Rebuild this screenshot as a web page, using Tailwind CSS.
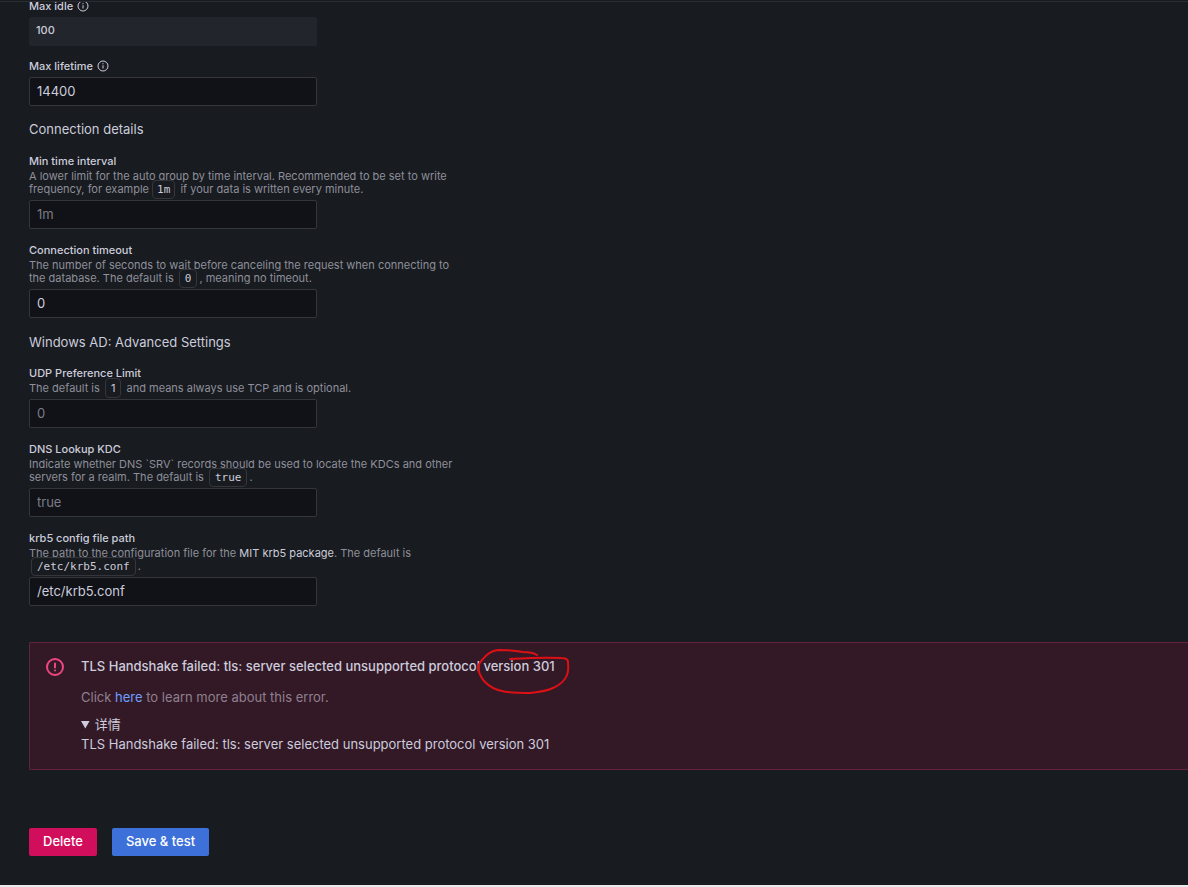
<!DOCTYPE html>
<html lang="en">
<head>
    <meta charset="utf-8">
    <title>Data source settings</title>
    <script src="https://cdn.jsdelivr.net/npm/@tailwindcss/browser@4"></script>
</head>
<body class="bg-[#181b1f] font-['Inter','Noto_Sans_CJK_SC',sans-serif] text-[13px] text-[#ccccdc]">
    <div class="flex flex-col min-h-screen overflow-hidden">
        <header class="h-[2px] border-b border-[#2a2d33]"></header>

        <main class="grow overflow-hidden pl-[29px]">
            <form id="settingsForm">
                <div class="-mt-[3px]">
                    <div class="flex items-center gap-1 mb-1">
                        <label for="maxIdle" class="text-[11px] leading-[14px] font-medium">Max idle</label>
                        <svg class="size-3" viewBox="0 0 12 12" fill="none" stroke="currentColor"><circle cx="6" cy="6" r="5"/><path d="M6 5.3v3.2M6 3.2v1.1"/></svg>
                    </div>
                    <input id="maxIdle" type="text" value="100" disabled class="block w-72 h-[29px] px-[7px] pb-[3px] bg-[#22252b] text-[11px] font-medium rounded-xs">
                </div>

                <div class="mt-[13px]">
                    <div class="flex items-center gap-1 mb-1">
                        <label for="maxLifetime" class="text-[11px] leading-[14px] font-medium">Max lifetime</label>
                        <svg class="size-3" viewBox="0 0 12 12" fill="none" stroke="currentColor"><circle cx="6" cy="6" r="5"/><path d="M6 5.3v3.2M6 3.2v1.1"/></svg>
                    </div>
                    <input id="maxLifetime" type="text" value="14400" class="block w-72 h-[29px] px-[7px] pb-[2px] bg-[#111217] border border-[#34363c] rounded-xs">
                </div>

                <h6 class="mt-[13px] leading-5">Connection details</h6>

                <div class="mt-[14px]">
                    <label for="minInterval" class="block mb-px text-[11px] leading-4 font-medium">Min time interval</label>
                    <p class="w-[432px] mb-1 text-[11px] leading-[13px] text-[#8e8f9b]">A lower limit for the auto group by time interval. Recommended to be set to write frequency, for example <code class="mr-[2px] px-1 py-[2px] font-['DejaVu_Sans_Mono',monospace] text-[#ccccdc] bg-[#181b1f] border border-[#34363c] rounded-sm">1m</code> if your data is written every minute.</p>
                    <input id="minInterval" type="text" placeholder="1m" class="block w-72 h-[29px] px-[7px] pb-[2px] bg-[#111217] border border-[#34363c] rounded-xs placeholder:text-[#7b7c87]">
                </div>

                <div class="mt-[13px]">
                    <label for="timeout" class="block mb-px text-[11px] leading-4 font-medium">Connection timeout</label>
                    <p class="w-[432px] mb-1 text-[11px] leading-[13px] text-[#8e8f9b]">The number of seconds to wait before canceling the request when connecting to the database. The default is <code class="mx-[2px] px-[5px] py-[2px] font-['DejaVu_Sans_Mono',monospace] text-[#ccccdc] bg-[#181b1f] border border-[#34363c] rounded-sm">0</code>, meaning no timeout.</p>
                    <input id="timeout" type="text" value="0" class="block w-72 h-[29px] px-[7px] pb-[2px] bg-[#111217] border border-[#34363c] rounded-xs">
                </div>

                <h6 class="mt-[14px] leading-5">Windows AD: Advanced Settings</h6>

                <div class="mt-[13px]">
                    <label for="udpLimit" class="block mb-px text-[11px] leading-4 font-medium">UDP Preference Limit</label>
                    <p class="w-[432px] mb-1 text-[11px] leading-[13px] text-[#8e8f9b]">The default is <code class="mx-[2px] px-[5px] py-[2px] font-['Inter',sans-serif] text-[#ccccdc] bg-[#181b1f] border border-[#34363c] rounded-sm">1</code> and means always use TCP and is optional.</p>
                    <input id="udpLimit" type="text" placeholder="0" class="block w-72 h-[29px] px-[7px] pb-[2px] bg-[#111217] border border-[#34363c] rounded-xs placeholder:text-[#7b7c87]">
                </div>

                <div class="mt-[13px]">
                    <label for="dnsLookup" class="block mb-px text-[11px] leading-4 font-medium">DNS Lookup KDC</label>
                    <p class="w-[432px] mb-1 text-[11px] leading-[13px] text-[#8e8f9b]">Indicate whether DNS `SRV` records should be used to locate the KDCs and other servers for a realm. The default is <code class="mx-[2px] px-[5px] py-[2px] font-['DejaVu_Sans_Mono',monospace] text-[#ccccdc] bg-[#181b1f] border border-[#34363c] rounded-sm">true</code>.</p>
                    <input id="dnsLookup" type="text" placeholder="true" class="block w-72 h-[29px] px-[7px] pb-[2px] bg-[#111217] border border-[#34363c] rounded-xs placeholder:text-[#7b7c87]">
                </div>

                <div class="mt-[13px]">
                    <label for="krb5Path" class="block mb-px text-[11px] leading-4 font-medium">krb5 config file path</label>
                    <p class="w-[432px] mb-1 text-[11px] leading-[13px] text-[#8e8f9b]">The path to the configuration file for the <a href="#" class="text-[#ccccdc]">MIT krb5 package</a>. The default is <code class="mx-[2px] px-[5px] py-[2px] font-['DejaVu_Sans_Mono',monospace] text-[#ccccdc] bg-[#181b1f] border border-[#34363c] rounded-sm">/etc/krb5.conf</code>.</p>
                    <input id="krb5Path" type="text" value="/etc/krb5.conf" class="block w-72 h-[29px] px-[7px] pb-[2px] bg-[#111217] border border-[#34363c] rounded-xs">
                </div>

                <div role="alert" class="flex gap-4 mt-9 pl-[15px] pt-[13px] pb-[15px] bg-[#331926] border border-r-0 border-[#64223f] rounded-l-xs">
                    <svg class="shrink-0 size-5 mt-px text-[#f0467f]" viewBox="0 0 20 20" fill="none" stroke="currentColor" stroke-width="2" stroke-linecap="round"><circle cx="10" cy="10" r="8"/><path d="M10 6.5v4M10 13.4v.1"/></svg>
                    <div>
                        <div class="leading-5 font-medium">TLS Handshake failed: tls: server selected unsupported protocol <span class="relative">version 301<svg class="absolute -left-[7px] -top-3 w-24 h-[50px] max-w-none" viewBox="476 646 96 50" fill="none" stroke="#dc1015" stroke-width="2" stroke-linecap="round" stroke-linejoin="round"><path d="M537 655C534 653 529 652 523 652C513 650 505 650 498 650C491 651 486 655 483 659C480 662 478 665 478 668C479 673 481 678 485 682C490 687 496 690 502 691C511 693 521 693 530 693C539 692 547 691 553 688C560 685 565 680 567 675C569 671 568 666 568 662C568 659 565 658 561 658C544 657 527 658 510 659"/></svg></span></div>
                        <p class="mt-[11px] leading-5 text-[#8f808f]">Click <a href="#" class="text-[#6e9fff]">here</a> to learn more about this error.</p>
                        <details open class="mt-[7px] leading-5">
                            <summary>详情</summary>
                            TLS Handshake failed: tls: server selected unsupported protocol version 301
                        </details>
                    </div>
                </div>

                <div class="flex gap-[15px] mt-[58px] mb-[29px]">
                    <button type="button" class="h-7 px-[14px] bg-[#d10e5c] text-white font-medium rounded-xs">Delete</button>
                    <button type="submit" class="h-7 px-[14px] bg-[#3d71d9] text-white font-medium rounded-xs">Save &amp; test</button>
                </div>
            </form>
        </main>

        <footer class="h-[2px] bg-[#e9e9ee]"></footer>
    </div>
</body>
</html>
